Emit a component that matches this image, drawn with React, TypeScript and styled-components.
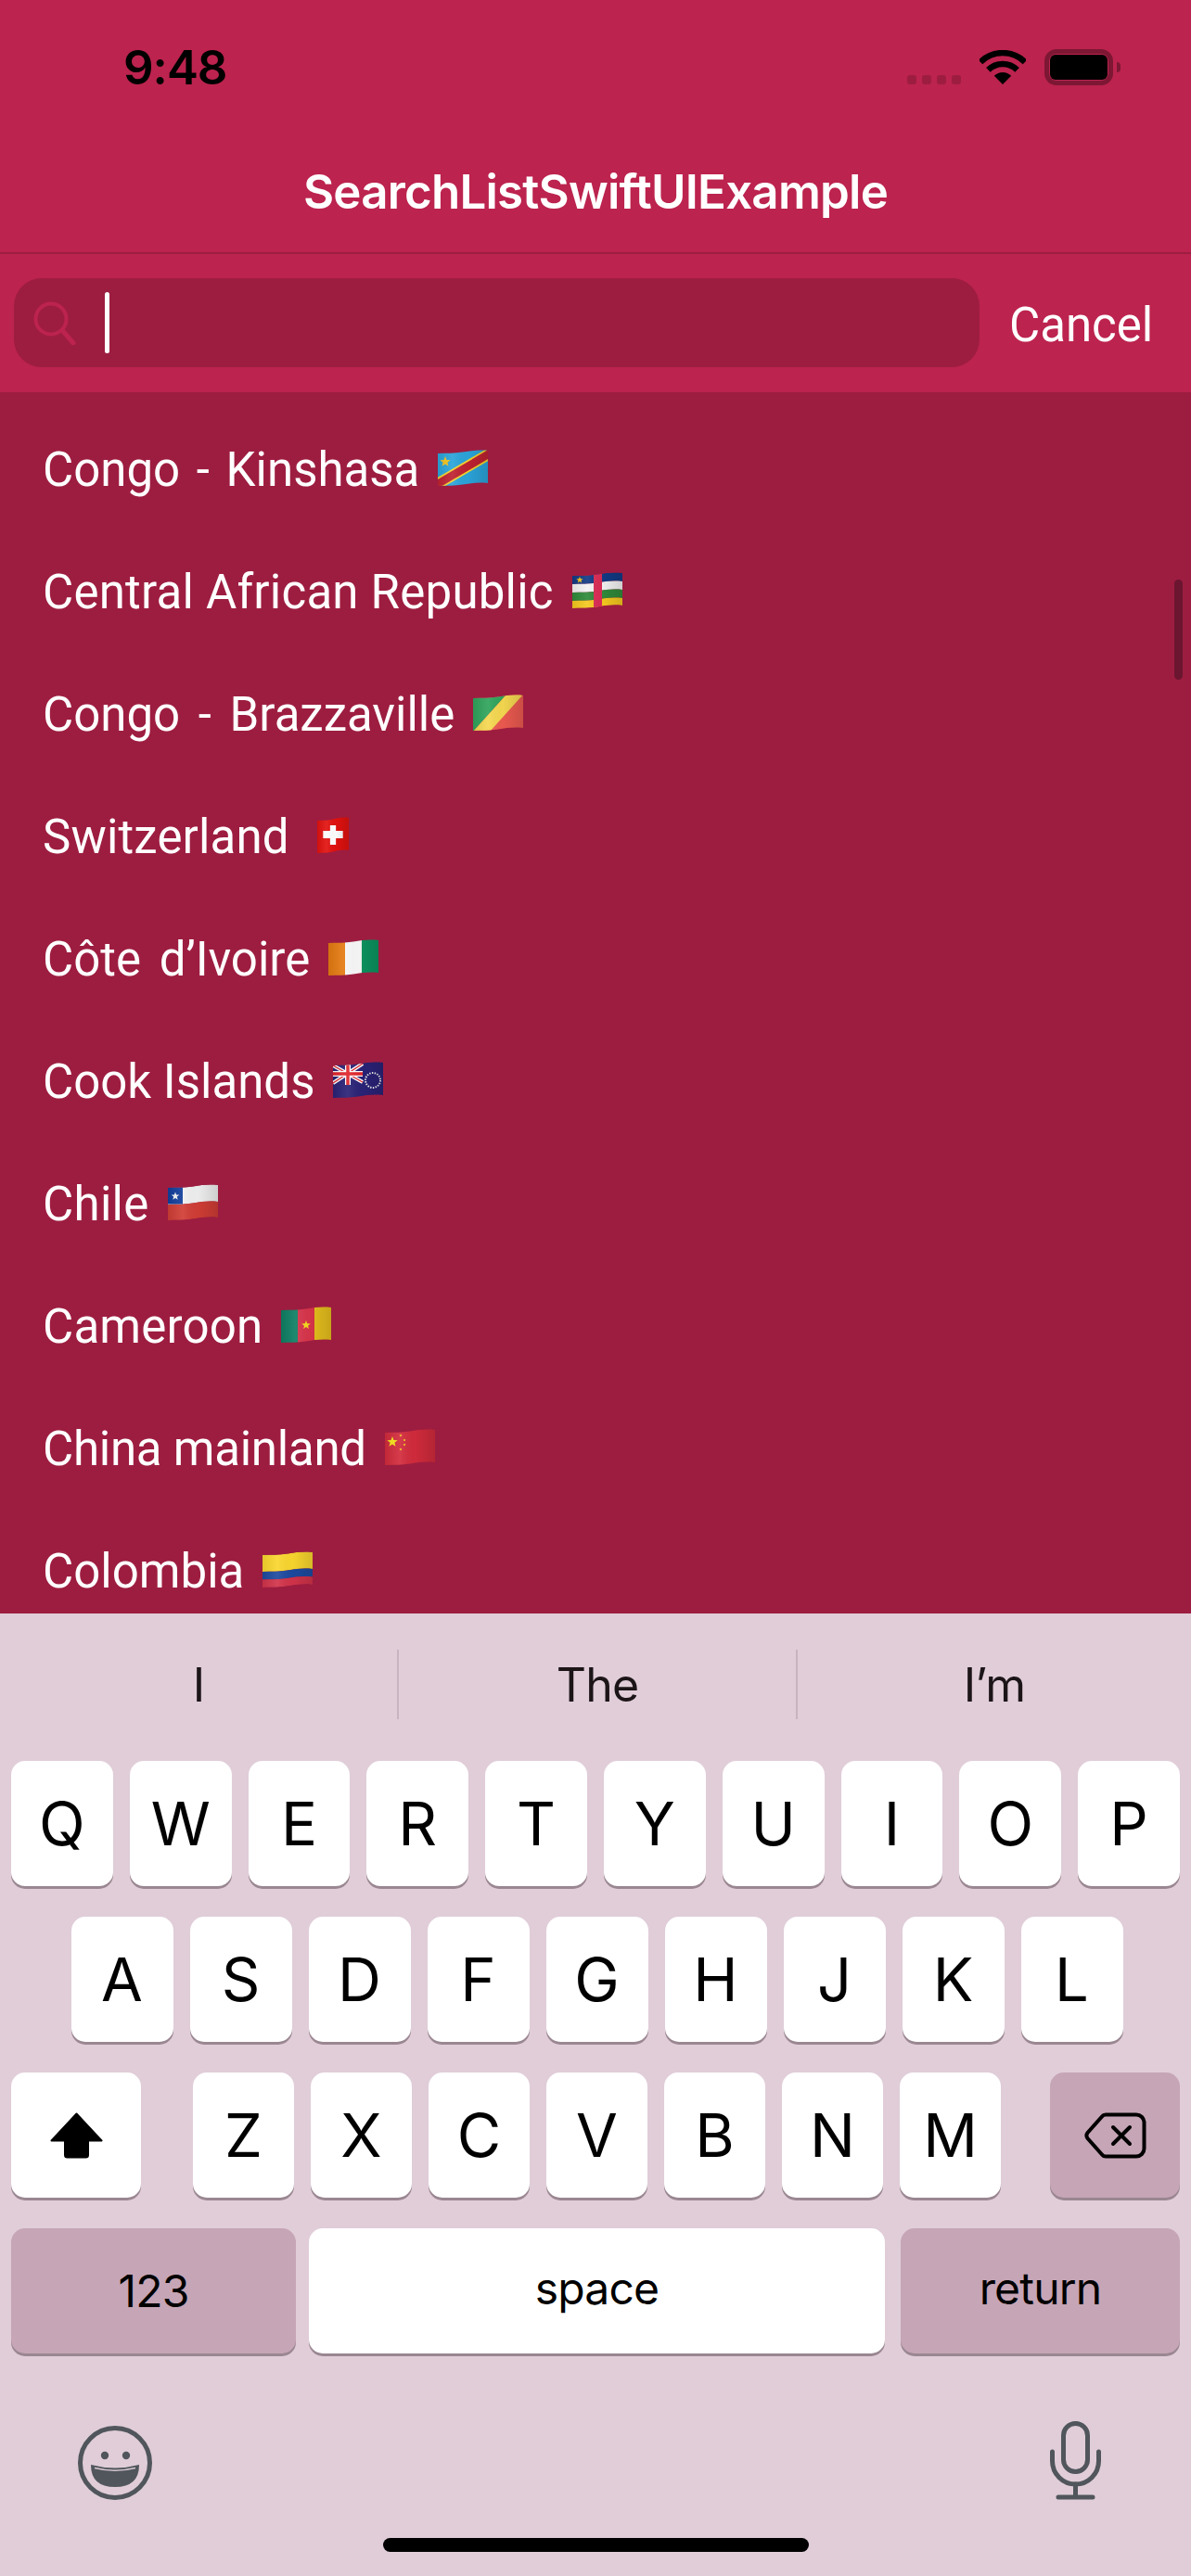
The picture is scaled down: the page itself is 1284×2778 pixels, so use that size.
import React, { useId } from 'react';
import styled, { createGlobalStyle } from 'styled-components';

const GlobalStyle = createGlobalStyle`
	html, body {
		margin: 0;
		padding: 0;
		background: #e0cdd8;
		font-family: Inter, "Liberation Sans", sans-serif;
	}
	* {
		box-sizing: border-box;
	}
`;

const Screen = styled.div`
	width: 1284px;
	height: 2778px;
	display: flex;
	flex-direction: column;
	overflow: hidden;
`;

const Header = styled.header`
	background: #bc234e;
	flex: none;
`;

const StatusBar = styled.div`
	height: 132px;
	padding: 13px 76px 0 133px;
	display: flex;
	align-items: center;
	justify-content: space-between;
`;

const Time = styled.span`
	font-size: 51px;
	font-weight: 600;
	letter-spacing: -1px;
	color: #000;
`;

const StatusIcons = styled.div`
	display: flex;
	align-items: center;
	gap: 20px;
`;

const SignalDots = styled.div`
	display: flex;
	gap: 6px;
	align-self: flex-end;
	margin-bottom: 1px;
`;

const SignalDot = styled.span`
	width: 10px;
	height: 10px;
	border-radius: 3px;
	background: #9d1d40;
`;

const Battery = styled.div`
	display: flex;
	align-items: center;
`;

const BatteryBody = styled.div`
	width: 74px;
	height: 39px;
	padding: 1px;
	border: 5px solid #7d1733;
	border-radius: 13px;
`;

const BatteryFill = styled.div`
	width: 100%;
	height: 100%;
	border-radius: 6px;
	background: #000;
`;

const BatteryNub = styled.div`
	width: 4px;
	height: 11px;
	margin-left: 4px;
	border-radius: 0 4px 4px 0;
	background: #7d1733;
`;

const NavBar = styled.div`
	height: 142px;
	padding-top: 8px;
	display: flex;
	align-items: center;
	justify-content: center;
	border-bottom: 2px solid #9d1d40;
`;

const Title = styled.h1`
	margin: 0;
	font-size: 51px;
	font-weight: 600;
	letter-spacing: -0.77px;
	color: #fff;
`;

const SearchRow = styled.div`
	height: 149px;
	padding: 26px 0 0 15px;
	display: flex;
	align-items: flex-start;
`;

const SearchField = styled.div`
	width: 1041px;
	height: 96px;
	padding-left: 21px;
	display: flex;
	align-items: center;
	gap: 31px;
	border-radius: 30px;
	background: #9d1d40;
`;

const Cursor = styled.span`
	width: 5px;
	height: 66px;
	border-radius: 3px;
	background: #fff;
`;

const Cancel = styled.span`
	height: 96px;
	margin-left: 32px;
	display: flex;
	align-items: center;
	padding-top: 4px;
	font-family: Roboto, sans-serif;
	font-size: 51px;
	color: #fff;
`;

const List = styled.main`
	position: relative;
	flex: 1;
	min-height: 0;
	padding-top: 16px;
	overflow: hidden;
	background: #9d1d40;
`;

const Row = styled.div<{ $gap?: number }>`
	height: 132px;
	padding-left: 46px;
	display: flex;
	align-items: center;
	gap: ${({ $gap }) => $gap ?? 20}px;
	font-family: Roboto, sans-serif;
	font-size: 51px;
	color: #fff;
`;

const RowLabel = styled.span<{ $word?: number; $track?: number }>`
	padding-top: 2px;
	word-spacing: ${({ $word }) => $word ?? 0}px;
	letter-spacing: ${({ $track }) => $track ?? 0}px;
`;

const ScrollThumb = styled.div`
	position: absolute;
	top: 202px;
	right: 9px;
	width: 9px;
	height: 108px;
	border-radius: 5px;
	background: #6b1530;
`;

const Keyboard = styled.section`
	flex: none;
	height: 1038px;
	background: #e0cdd8;
`;

const Suggestions = styled.div`
	height: 159px;
	padding-top: 39px;
	display: grid;
	grid-template-columns: 428px 430px 1fr;
	align-items: start;
`;

const Suggestion = styled.div<{ $divider?: boolean }>`
	height: 75px;
	display: flex;
	align-items: center;
	justify-content: center;
	font-size: 50px;
	letter-spacing: -0.9px;
	color: #1c1518;
	border-left: ${({ $divider }) => ($divider ? '2px solid #c8b4c0' : 'none')};
`;

const Keys = styled.div`
	display: flex;
	flex-direction: column;
	gap: 33px;
	padding: 0 12px;
`;

const KeyRow = styled.div<{ $center?: boolean; $gap?: number }>`
	display: flex;
	gap: ${({ $gap }) => $gap ?? 18}px;
	justify-content: ${({ $center }) => ($center ? 'center' : 'flex-start')};
	padding-left: ${({ $center }) => ($center ? '3px' : '0')};
`;

const Key = styled.div<{ $w?: number; $dark?: boolean; $small?: boolean; $raise?: boolean; $push?: boolean }>`
	flex: ${({ $w }) => ($w ? `0 0 ${$w}px` : '1 1 0')};
	height: 135px;
	margin-left: ${({ $push }) => ($push ? 'auto' : '0')};
	display: flex;
	align-items: center;
	justify-content: center;
	padding-bottom: ${({ $raise }) => ($raise ? '6px' : '0')};
	border-radius: 15px;
	font-size: ${({ $small }) => ($small ? '48px' : '65px')};
	letter-spacing: ${({ $small }) => ($small ? '-0.8px' : '0')};
	color: #000;
	background: ${({ $dark }) => ($dark ? '#c6a5b6' : '#fff')};
	box-shadow: 0 3px 0 #9a8791;
`;

const LetterGroup = styled.div`
	display: flex;
	gap: 18px;
	margin-left: 38px;
`;

const BottomBar = styled.div`
	height: 85px;
	margin-top: 73px;
	padding: 0 97px 0 84px;
	display: flex;
	align-items: flex-end;
	justify-content: space-between;
`;

const HomeIndicator = styled.div`
	width: 459px;
	height: 15px;
	margin: 41px auto 0;
	border-radius: 8px;
	background: #000;
`;

const FlagSvg = styled.svg`
	flex: none;
	display: block;
`;

// emoji flags are wavy, so every stripe follows the same curve
const band = (t: number, b: number) =>
	`M0 ${4 + t} C10 ${3.5 + t} 18 ${4 + t} 27 ${2.5 + t} C36 ${1 + t} 44 ${t} 54 ${1 + t} L54 ${1 + b} C44 ${b} 36 ${1 + b} 27 ${2.5 + b} C18 ${4 + b} 10 ${3.5 + b} 0 ${4 + b} Z`;

const star = (cx: number, cy: number, r: number) => {
	const pts: string[] = [];
	for (let i = 0; i < 10; i++) {
		const rad = i % 2 === 0 ? r : r * 0.42;
		const a = -Math.PI / 2 + (i * Math.PI) / 5;
		pts.push(`${(cx + rad * Math.cos(a)).toFixed(2)},${(cy + rad * Math.sin(a)).toFixed(2)}`);
	}
	return pts.join(' ');
};

function Flag({ children, width = 54 }: { children: React.ReactNode; width?: number }) {
	const id = useId();
	return (
		<FlagSvg width={width} height={40} viewBox="0 0 54 40" preserveAspectRatio="none">
			<defs>
				<clipPath id={`${id}c`}>
					<path d={band(0, 35)} />
				</clipPath>
				<linearGradient id={`${id}s`} x1="0" y1="0" x2="1" y2="0">
					<stop offset="0" stopColor="#000" stopOpacity="0.08" />
					<stop offset="0.3" stopColor="#fff" stopOpacity="0.08" />
					<stop offset="0.6" stopColor="#000" stopOpacity="0.02" />
					<stop offset="1" stopColor="#000" stopOpacity="0.14" />
				</linearGradient>
			</defs>
			<g clipPath={`url(#${id}c)`}>
				{children}
				<rect width="54" height="40" fill={`url(#${id}s)`} />
			</g>
		</FlagSvg>
	);
}

const DrCongoFlag = () => (
	<Flag>
		<rect width="54" height="40" fill="#2ba4da" />
		<path d="M-2 38 L56 4" stroke="#f6d32d" strokeWidth="12" />
		<path d="M-2 38 L56 4" stroke="#bf2231" strokeWidth="8.5" />
		<polygon points={star(8, 13, 6)} fill="#f3c31c" />
	</Flag>
);

const CentralAfricaFlag = () => (
	<Flag>
		<path d={band(0, 9)} fill="#123a84" />
		<path d={band(9, 18)} fill="#f2f2f2" />
		<path d={band(18, 27)} fill="#2f8a3a" />
		<path d={band(27, 35)} fill="#f5c91f" />
		<rect x="23" width="9" height="40" fill="#d92c55" />
		<polygon points={star(8, 8.5, 3.8)} fill="#f3c31c" />
	</Flag>
);

const CongoFlag = () => (
	<Flag>
		<rect width="54" height="40" fill="#ec5a50" />
		<path d="M0 0 H36 L0 40 Z" fill="#2fa45c" />
		<path d="M36 0 H54 L18 40 H0 Z" fill="#f5d850" />
	</Flag>
);

const SwissFlag = () => (
	<Flag width={34}>
		<rect width="54" height="40" fill="#e2120f" />
		<path d="M22 9 H32 V15 H44 V23 H32 V30 H22 V23 H10 V15 H22 Z" fill="#fff" />
	</Flag>
);

const IvoryCoastFlag = () => (
	<Flag>
		<rect width="18" height="40" fill="#e47a10" />
		<rect x="18" width="18" height="40" fill="#f8f8f8" />
		<rect x="36" width="18" height="40" fill="#0b9560" />
	</Flag>
);

const CookIslandsFlag = () => (
	<Flag>
		<rect width="54" height="40" fill="#2a2277" />
		<path d="M0 4 L32 22 M32 2 L0 23" stroke="#fff" strokeWidth="4" />
		<path d="M0 4 L32 22 M32 2 L0 23" stroke="#e0252b" strokeWidth="1.4" />
		<path d="M16 0 V25 M0 13 H32" stroke="#fff" strokeWidth="6" />
		<path d="M16 0 V25 M0 13 H32" stroke="#e0252b" strokeWidth="3.5" />
		<circle cx="43" cy="20" r="8" fill="none" stroke="#f0f0f0" strokeWidth="2" strokeDasharray="1.4 1.4" />
	</Flag>
);

const ChileFlag = () => (
	<Flag>
		<path d={band(0, 18)} fill="#f0f0f0" />
		<path d={band(18, 35)} fill="#d03d35" />
		<path d="M0 0 H16 V21.5 H0 Z" fill="#123f9c" />
		<polygon points={star(8, 13, 4.6)} fill="#f4f4f4" />
	</Flag>
);

const CameroonFlag = () => (
	<Flag>
		<rect width="18" height="40" fill="#0d7f63" />
		<rect x="18" width="18" height="40" fill="#d7344a" />
		<rect x="36" width="18" height="40" fill="#e6c01d" />
		<polygon points={star(27, 20, 5)} fill="#f5dc1e" />
	</Flag>
);

const ChinaFlag = () => (
	<Flag>
		<rect width="54" height="40" fill="#d22b3c" />
		<polygon points={star(8, 14, 6)} fill="#f6e51a" />
		<polygon points={star(17, 7, 1.6)} fill="#f6e51a" />
		<polygon points={star(21, 12, 1.6)} fill="#f6e51a" />
		<polygon points={star(21, 17, 1.6)} fill="#f6e51a" />
		<polygon points={star(17, 22, 1.6)} fill="#f6e51a" />
	</Flag>
);

const ColombiaFlag = () => (
	<Flag>
		<path d={band(0, 18)} fill="#f9d62e" />
		<path d={band(18, 26.5)} fill="#1d4aa0" />
		<path d={band(26.5, 35)} fill="#d2334a" />
	</Flag>
);

const countries: { name: string; flag: React.ReactNode; word?: number; track?: number; gap?: number }[] = [
	{ name: 'Congo - Kinshasa', flag: <DrCongoFlag />, word: 5 },
	{ name: 'Central African Republic', flag: <CentralAfricaFlag />, track: 0.22 },
	{ name: 'Congo - Brazzaville', flag: <CongoFlag />, word: 7 },
	{ name: 'Switzerland', flag: <SwissFlag />, track: 0.16, gap: 30 },
	{ name: 'Côte d’Ivoire', flag: <IvoryCoastFlag />, word: 7 },
	{ name: 'Cook Islands', flag: <CookIslandsFlag /> },
	{ name: 'Chile', flag: <ChileFlag />, track: 0.3 },
	{ name: 'Cameroon', flag: <CameroonFlag />, track: 0.2 },
	{ name: 'China mainland', flag: <ChinaFlag />, track: -0.25 },
	{ name: 'Colombia', flag: <ColombiaFlag /> },
];

const WifiIcon = () => (
	<svg width="50" height="37" viewBox="0 0 50 37">
		<path d="M1 13 A34 34 0 0 1 49 13" fill="none" stroke="#000" strokeWidth="6.5" />
		<path d="M9.4 21.4 A22 22 0 0 1 40.6 21.4" fill="none" stroke="#000" strokeWidth="6.5" />
		<path d="M25 37 L15.8 27.8 A13 13 0 0 1 34.2 27.8 Z" fill="#000" />
	</svg>
);

const SearchIcon = () => (
	<svg width="46" height="47" viewBox="0 0 46 47" fill="none" stroke="#bc234e">
		<circle cx="19" cy="19" r="16.5" strokeWidth="4" />
		<path d="M31 31 L43 45" strokeWidth="5" strokeLinecap="round" />
	</svg>
);

const ShiftIcon = () => (
	<svg width="57" height="50" viewBox="0 0 57 50">
		<path
			d="M28.5 1.5 L55.5 30.5 H41 V46 Q41 48.5 38.5 48.5 H18.5 Q16 48.5 16 46 V30.5 H1.5 Z"
			fill="#000"
			stroke="#000"
			strokeWidth="2"
			strokeLinejoin="round"
		/>
	</svg>
);

const DeleteIcon = () => (
	<svg width="67" height="50" viewBox="0 0 67 50" fill="none" stroke="#000" strokeWidth="4">
		<path d="M23 2.5 H56 a8.5 8.5 0 0 1 8.5 8.5 V39 a8.5 8.5 0 0 1 -8.5 8.5 H23 a5 5 0 0 1 -4 -2 L3.5 28 a5 5 0 0 1 0 -6 L19 4.5 a5 5 0 0 1 4 -2 Z" />
		<path d="M31 16 L49 34 M49 16 L31 34" strokeLinecap="round" />
	</svg>
);

const EmojiIcon = () => (
	<svg width="80" height="80" viewBox="0 0 80 80">
		<circle cx="40" cy="40" r="37.5" fill="none" stroke="#50565c" strokeWidth="5" />
		<circle cx="29" cy="32" r="4.2" fill="#50565c" />
		<circle cx="52" cy="32" r="4.2" fill="#50565c" />
		<path d="M14 42 Q40 49 66 42 Q66 66 40 66 Q14 66 14 42 Z" fill="#50565c" />
		<path d="M18 45.5 Q40 51 62 45.5" fill="none" stroke="#d8c8d2" strokeWidth="1.5" />
	</svg>
);

const MicIcon = () => (
	<svg width="55" height="85" viewBox="0 0 55 85" fill="none" stroke="#50565c" strokeWidth="5" strokeLinecap="round">
		<rect x="14.5" y="2.5" width="26" height="52" rx="13" />
		<path d="M2.5 33 V43 a25 25 0 0 0 50 0 V33" />
		<path d="M27.5 68 V82 M9 82 H46" />
	</svg>
);

export default function App() {
	return (
		<Screen>
			<GlobalStyle />
			<Header>
				<StatusBar>
					<Time>9:48</Time>
					<StatusIcons>
						<SignalDots>
							<SignalDot />
							<SignalDot />
							<SignalDot />
							<SignalDot />
						</SignalDots>
						<WifiIcon />
						<Battery>
							<BatteryBody>
								<BatteryFill />
							</BatteryBody>
							<BatteryNub />
						</Battery>
					</StatusIcons>
				</StatusBar>
				<NavBar>
					<Title>SearchListSwiftUIExample</Title>
				</NavBar>
				<SearchRow>
					<SearchField>
						<SearchIcon />
						<Cursor />
					</SearchField>
					<Cancel>Cancel</Cancel>
				</SearchRow>
			</Header>

			<List>
				{countries.map((c) => (
					<Row key={c.name} $gap={c.gap}>
						<RowLabel $word={c.word} $track={c.track}>
							{c.name}
						</RowLabel>
						{c.flag}
					</Row>
				))}
				<ScrollThumb />
			</List>

			<Keyboard>
				<Suggestions>
					<Suggestion>I</Suggestion>
					<Suggestion $divider>The</Suggestion>
					<Suggestion $divider>I’m</Suggestion>
				</Suggestions>
				<Keys>
					<KeyRow>
						{'QWERTYUIOP'.split('').map((l) => (
							<Key key={l}>{l}</Key>
						))}
					</KeyRow>
					<KeyRow $center>
						{'ASDFGHJKL'.split('').map((l) => (
							<Key key={l} $w={110}>
								{l}
							</Key>
						))}
					</KeyRow>
					<KeyRow>
						<Key $w={140}>
							<ShiftIcon />
						</Key>
						<LetterGroup>
							{'ZXCVBNM'.split('').map((l) => (
								<Key key={l} $w={109}>
									{l}
								</Key>
							))}
						</LetterGroup>
						<Key $w={140} $dark $push>
							<DeleteIcon />
						</Key>
					</KeyRow>
					<KeyRow $gap={14}>
						<Key $w={307} $dark $small>
							123
						</Key>
						<Key $w={621} $small $raise>
							space
						</Key>
						<Key $w={301} $dark $small $raise $push>
							return
						</Key>
					</KeyRow>
				</Keys>
				<BottomBar>
					<EmojiIcon />
					<MicIcon />
				</BottomBar>
				<HomeIndicator />
			</Keyboard>
		</Screen>
	);
}
